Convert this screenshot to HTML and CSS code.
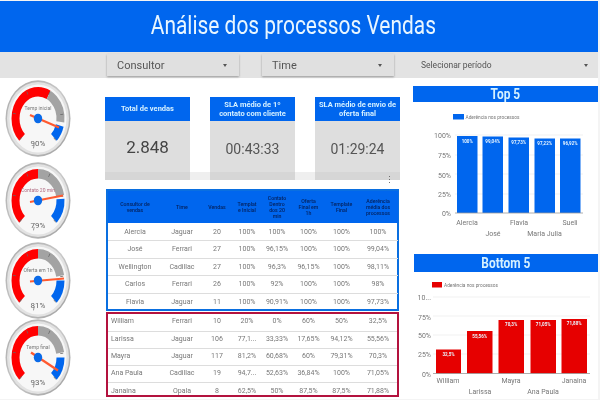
FILE: index.html
```html
<!DOCTYPE html>
<html lang="pt-BR">
<head>
    <meta charset="UTF-8">
    <title>Análise dos processos Vendas</title>
    <link rel="stylesheet" href="styles.css">
</head>
<body>
<div class="page">
    <header class="title"><span class="squeeze">Análise dos processos Vendas</span></header>

    <div class="filters">
        <div class="chip chip-consultor"><span>Consultor</span><i class="caret"></i></div>
        <div class="chip chip-time"><span>Time</span><i class="caret"></i></div>
        <div class="period"><span>Selecionar período</span><i class="caret"></i></div>
    </div>

    <div class="main">
        <div class="gauges">
            <svg class="gauge" viewBox="-38 -38.5 76 77">
                <defs>
                    <linearGradient id="bezel" x1="0" y1="0" x2="1" y2="1">
                        <stop offset="0" stop-color="#a8a8a8"/>
                        <stop offset="0.5" stop-color="#c8c8c8"/>
                        <stop offset="1" stop-color="#9c9c9c"/>
                    </linearGradient>
                    <g id="face">
                        <ellipse class="rim" rx="32.5" ry="38.2"/>
                        <ellipse class="rim-in" rx="31" ry="36.6"/>
                        <ellipse class="dial" rx="28.5" ry="34"/>
                    </g>
                </defs>
                <use href="#face"/>
                <g class="scale">
                    <circle class="arc red" r="22.5" pathLength="360" stroke-dasharray="163 360"/>
                    <circle class="arc gray" r="22.5" pathLength="360" stroke-dasharray="69 360" stroke-dashoffset="-163"/>
                    <circle class="arc blue" r="22.5" pathLength="360" stroke-dasharray="30 360" stroke-dashoffset="-240"/>
                    <circle class="ticks" r="24" pathLength="360" stroke-dasharray="1.5 52.5"/>
                </g>
                <text class="g-label" y="-9">Temp inicial</text>
                <line class="needle" x1="-8" y1="-3.5" x2="21" y2="9"/>
                <ellipse class="hub" rx="4.2" ry="4.8"/>
                <text class="g-value" y="27">90%</text>
            </svg>

            <svg class="gauge gauge-2" viewBox="-38 -38.5 76 77">
                <use href="#face"/>
                <g class="scale">
                    <circle class="arc red" r="22.5" pathLength="360" stroke-dasharray="135 360"/>
                    <circle class="arc gray" r="22.5" pathLength="360" stroke-dasharray="80 360" stroke-dashoffset="-135"/>
                    <circle class="arc blue" r="22.5" pathLength="360" stroke-dasharray="48 360" stroke-dashoffset="-222"/>
                    <circle class="ticks" r="24" pathLength="360" stroke-dasharray="1.5 52.5"/>
                </g>
                <text class="g-label g-label-pink" y="-9">Contato 20 min</text>
                <line class="needle" x1="-8" y1="1.5" x2="25" y2="-5"/>
                <ellipse class="hub" rx="4.2" ry="4.8"/>
                <text class="g-value" y="27">79%</text>
            </svg>

            <svg class="gauge gauge-3" viewBox="-38 -38.5 76 77">
                <use href="#face"/>
                <g class="scale">
                    <circle class="arc red" r="22.5" pathLength="360" stroke-dasharray="135 360"/>
                    <circle class="arc gray" r="22.5" pathLength="360" stroke-dasharray="80 360" stroke-dashoffset="-135"/>
                    <circle class="arc blue" r="22.5" pathLength="360" stroke-dasharray="45 360" stroke-dashoffset="-225"/>
                    <circle class="ticks" r="24" pathLength="360" stroke-dasharray="1.5 52.5"/>
                </g>
                <text class="g-label" y="-9">Oferta em 1h</text>
                <line class="needle" x1="-8" y1="1" x2="26" y2="-2"/>
                <ellipse class="hub" rx="4.2" ry="4.8"/>
                <text class="g-value" y="27">81%</text>
            </svg>

            <svg class="gauge" viewBox="-38 -38.5 76 77">
                <use href="#face"/>
                <g class="scale">
                    <circle class="arc red" r="22.5" pathLength="360" stroke-dasharray="135 360"/>
                    <circle class="arc gray" r="22.5" pathLength="360" stroke-dasharray="80 360" stroke-dashoffset="-135"/>
                    <circle class="arc blue" r="22.5" pathLength="360" stroke-dasharray="45 360" stroke-dashoffset="-225"/>
                    <circle class="ticks" r="24" pathLength="360" stroke-dasharray="1.5 52.5"/>
                </g>
                <text class="g-label" y="-9">Temp final</text>
                <line class="needle" x1="-7" y1="-5" x2="20" y2="13"/>
                <ellipse class="hub" rx="4.2" ry="4.8"/>
                <text class="g-value" y="27">93%</text>
            </svg>
        </div>

        <div class="middle">
            <div class="cards">
                <div class="card">
                    <div class="card-head">Total de vendas</div>
                    <div class="card-value card-value-big">2.848</div>
                </div>
                <div class="card">
                    <div class="card-head">SLA médio de 1º<br>contato com cliente</div>
                    <div class="card-value">00:43:33</div>
                </div>
                <div class="card">
                    <div class="card-head">SLA médio de envio de<br>oferta final</div>
                    <div class="card-value">01:29:24</div>
                </div>
                <span class="more">⋮</span>
            </div>

            <div class="box box-blue">
                <table>
                    <colgroup>
                        <col class="c-name"><col class="c-time"><col class="c-num"><col class="c-num"><col class="c-num"><col class="c-pct"><col class="c-pct"><col class="c-time">
                    </colgroup>
                    <thead>
                        <tr>
                            <th>Consultor de<br>vendas</th>
                            <th>Time</th>
                            <th>Vendas</th>
                            <th>Templat<br>e Inicial</th>
                            <th>Contato<br>Dentro<br>dos 20<br>min</th>
                            <th>Oferta<br>Final em<br>1h</th>
                            <th>Template<br>Final</th>
                            <th>Aderência<br>média dos<br>processos</th>
                        </tr>
                    </thead>
                    <tbody>
                        <tr><td>Alercia</td><td>Jaguar</td><td>20</td><td>100%</td><td>100%</td><td>100%</td><td>100%</td><td>100%</td></tr>
                        <tr><td>José</td><td>Ferrari</td><td>27</td><td>100%</td><td>96,15%</td><td>100%</td><td>100%</td><td>99,04%</td></tr>
                        <tr><td>Wellington</td><td>Cadillac</td><td>27</td><td>100%</td><td>96,3%</td><td>96,15%</td><td>100%</td><td>98,11%</td></tr>
                        <tr><td>Carlos</td><td>Ferrari</td><td>26</td><td>100%</td><td>92%</td><td>100%</td><td>100%</td><td>98%</td></tr>
                        <tr><td>Flavia</td><td>Jaguar</td><td>11</td><td>100%</td><td>90,91%</td><td>100%</td><td>100%</td><td>97,73%</td></tr>
                    </tbody>
                </table>
            </div>

            <div class="box box-red">
                <table>
                    <colgroup>
                        <col class="c-name"><col class="c-time"><col class="c-num"><col class="c-num"><col class="c-num"><col class="c-pct"><col class="c-pct"><col class="c-time">
                    </colgroup>
                    <tbody>
                        <tr><td class="left">William</td><td>Ferrari</td><td>10</td><td>20%</td><td>0%</td><td>60%</td><td>50%</td><td>32,5%</td></tr>
                        <tr><td class="left">Larissa</td><td>Jaguar</td><td>106</td><td>77,1...</td><td>33,33%</td><td>17,65%</td><td>94,12%</td><td>55,56%</td></tr>
                        <tr><td class="left">Mayra</td><td>Jaguar</td><td>117</td><td>81,2%</td><td>60,68%</td><td>60%</td><td>79,31%</td><td>70,3%</td></tr>
                        <tr><td class="left">Ana Paula</td><td>Cadillac</td><td>19</td><td>94,7...</td><td>52,63%</td><td>36,84%</td><td>100%</td><td>71,05%</td></tr>
                        <tr><td class="left">Janaina</td><td>Opala</td><td>8</td><td>62,5%</td><td>50%</td><td>87,5%</td><td>87,5%</td><td>71,88%</td></tr>
                    </tbody>
                </table>
            </div>
        </div>

        <div class="right">
            <h2 class="chart-title"><span class="squeeze">Top 5</span></h2>
            <svg class="chart chart-top" viewBox="413 102 185 150">
                <rect class="blue-fill" x="453" y="114" width="11" height="5.5"/>
                <text class="legend" x="465.5" y="119">Aderência nos processos</text>

                <line class="grid" x1="455" y1="135" x2="583" y2="135"/>
                <line class="grid" x1="455" y1="155" x2="583" y2="155"/>
                <line class="grid" x1="455" y1="174" x2="583" y2="174"/>
                <line class="grid" x1="455" y1="194" x2="583" y2="194"/>

                <text class="tick" x="451" y="138">100%</text>
                <text class="tick" x="451" y="158">75%</text>
                <text class="tick" x="451" y="178">50%</text>
                <text class="tick" x="451" y="197">25%</text>
                <text class="tick" x="451" y="216">0%</text>

                <rect class="blue-fill" x="457" y="136" width="20.5" height="77"/>
                <rect class="blue-fill" x="482.5" y="136.5" width="20.5" height="76.5"/>
                <rect class="blue-fill" x="508.5" y="137.5" width="20.5" height="75.5"/>
                <rect class="blue-fill" x="534.5" y="138.5" width="20.5" height="74.5"/>
                <rect class="blue-fill" x="560" y="138.5" width="20.5" height="74.5"/>
                <line class="axis" x1="455" y1="213" x2="583" y2="213"/>

                <text class="bar-val" x="467.2" y="142.5">100%</text>
                <text class="bar-val" x="492.7" y="142.5">99,04%</text>
                <text class="bar-val" x="518.7" y="143.5">97,73%</text>
                <text class="bar-val" x="544.7" y="144.5">97,22%</text>
                <text class="bar-val" x="570.2" y="144.5">96,92%</text>

                <text class="cat" x="467" y="225">Alercia</text>
                <text class="cat" x="493" y="236">José</text>
                <text class="cat" x="519" y="225">Flavia</text>
                <text class="cat" x="544.5" y="236">Maria Julia</text>
                <text class="cat" x="570" y="225">Sueli</text>
            </svg>

            <h2 class="chart-title chart-title-2"><span class="squeeze">Bottom 5</span></h2>
            <svg class="chart chart-bottom" viewBox="414 272 184 126">
                <rect class="red-fill" x="432" y="282" width="10" height="5.5"/>
                <text class="legend" x="444" y="287">Aderência nos processos</text>

                <line class="grid" x1="433" y1="297" x2="590" y2="297"/>
                <line class="grid" x1="433" y1="316" x2="590" y2="316"/>
                <line class="grid" x1="433" y1="335" x2="590" y2="335"/>
                <line class="grid" x1="433" y1="354" x2="590" y2="354"/>

                <text class="tick" x="431" y="300">10...</text>
                <text class="tick" x="431" y="319.5">75%</text>
                <text class="tick" x="431" y="338">50%</text>
                <text class="tick" x="431" y="357">25%</text>
                <text class="tick" x="431" y="377">0%</text>

                <rect class="red-fill" x="436" y="349.5" width="25" height="24"/>
                <rect class="red-fill" x="467" y="331" width="25.5" height="42.5"/>
                <rect class="red-fill" x="498.5" y="320" width="25.5" height="53.5"/>
                <rect class="red-fill" x="530.5" y="320" width="25.5" height="53.5"/>
                <rect class="red-fill" x="561.5" y="319" width="25.5" height="54.5"/>
                <line class="axis" x1="433" y1="373.5" x2="590" y2="373.5"/>

                <text class="bar-val" x="448.5" y="356">32,5%</text>
                <text class="bar-val" x="479.7" y="337.5">55,56%</text>
                <text class="bar-val" x="511.2" y="325.5">70,3%</text>
                <text class="bar-val" x="543.2" y="325.5">71,05%</text>
                <text class="bar-val" x="574.2" y="325">71,88%</text>

                <text class="cat" x="448" y="383">William</text>
                <text class="cat" x="480" y="394">Larissa</text>
                <text class="cat" x="511" y="383">Mayra</text>
                <text class="cat" x="543" y="394">Ana Paula</text>
                <text class="cat" x="574" y="383">Janaina</text>
            </svg>
        </div>
    </div>
</div>
</body>
</html>
```

FILE: styles.css
```css
html, body {
    padding:0px;
    margin:0px;
    background: #f4f4f4;
    font-family:Roboto, "Liberation Sans", sans-serif;
    overflow:hidden;
}

.page {
    width:598px;
    height:398px;
    margin-top:1px;
    background:white;
    filter:blur(0.4px);
}

.squeeze {
    display:inline-block;
    transform:scaleX(0.85);
}

.title {
    height:51px;
    background:#0066ee;
    color:#e8f6ff;
    font-size:25px;
    line-height:50px;
    text-align:center;
    padding-right:11px;
    box-sizing:border-box;
}

.title .squeeze {
    transform:scaleX(0.837);
}

.filters {
    height:26px;
    background:#e3e3e3;
    display:flex;
    align-items:flex-start;
    padding-left:107px;
    color:#555;
}

.chip {
    width:132px;
    height:22px;
    margin-top:2px;
    background:#e0e0e0;
    box-shadow:0px 1px 2px #999;
    display:flex;
    align-items:center;
    justify-content:space-between;
    padding:0px 12px 0px 10px;
    box-sizing:border-box;
    font-size:11px;
}

.chip-time {
    margin-left:23px;
}

.period {
    flex:1;
    height:26px;
    margin-left:1px;
    display:flex;
    align-items:center;
    justify-content:space-between;
    padding:0px 10px 0px 26px;
    font-size:8.5px;
}

.caret {
    width:0;
    height:0;
    border-left:2px solid transparent;
    border-right:2px solid transparent;
    border-top:3px solid #555;
}

.main {
    display:flex;
    height:321px;
}

.gauges {
    width:105px;
    padding-top:2px;
    box-sizing:border-box;
}

.gauge {
    display:block;
    width:76px;
    height:77px;
}

.gauge-2 {
    margin-top:5px;
}

.gauge-3 {
    margin-top:3px;
}

.rim { fill:url(#bezel); }
.rim-in { fill:#e2e2e2; }
.dial { fill:#f7f7f7; }

.scale {
    transform:scale(1, 1.19) rotate(135deg);
}

.arc {
    fill:none;
    stroke-width:8;
}

.red { stroke:#ff0000; }
.gray { stroke:#a3a3a3; }
.blue { stroke:#0066ee; }

.ticks {
    fill:none;
    stroke:#666;
    stroke-width:3;
}

.needle {
    stroke:#ff5a30;
    stroke-width:2.2;
}

.hub { fill:#0a6ae8; }

.g-label {
    font-size:5px;
    fill:#777;
    text-anchor:middle;
}

.g-label-pink {
    fill:#b06a80;
}

.g-value {
    font-size:8px;
    fill:#666;
    text-anchor:middle;
}

.middle {
    width:295px;
    padding-top:19px;
    box-sizing:border-box;
}

.cards {
    position:relative;
    display:flex;
    justify-content:space-between;
    height:83px;
    background:linear-gradient(to bottom, transparent 75px, #efefef 75px);
}

.card {
    width:85px;
    display:flex;
    flex-direction:column;
    background:linear-gradient(to bottom, #dedede 75px, #d6d6d6 75px);
}

.card-head {
    height:24px;
    background:#0066ee;
    color:#d5f1ff;
    font-size:7.5px;
    font-weight:bold;
    line-height:9.5px;
    text-align:center;
    display:flex;
    align-items:center;
    justify-content:center;
    white-space:nowrap;
}

.card-value {
    flex:1;
    display:flex;
    align-items:center;
    justify-content:center;
    padding-bottom:4px;
    font-size:14px;
    color:#555;
}

.card-value-big {
    font-size:17px;
    color:#444;
    padding-bottom:8px;
}

.more {
    position:absolute;
    right:6px;
    bottom:-5px;
    font-size:9px;
    line-height:10px;
    color:#666;
}

.box {
    box-sizing:border-box;
    margin-left:1px;
    width:293px;
    background:white;
}

.box-blue {
    height:122px;
    margin-top:9px;
    border:2px solid #0a6fe0;
}

.box-red {
    height:85px;
    margin-top:1px;
    border:2px solid #b3123e;
    overflow:hidden;
}

table {
    width:100%;
    table-layout:fixed;
    border-collapse:collapse;
    font-size:7px;
    color:#777;
    text-align:center;
}

.c-name { width:54px; }
.c-time { width:40px; }
.c-num { width:30px; }
.c-pct { width:33px; }

th {
    height:32px;
    padding:0px;
    background:#0066ee;
    color:#04205a;
    font-size:5.2px;
    font-weight:500;
    line-height:6px;
}

td {
    box-sizing:border-box;
    height:17.5px;
    padding:0px;
    border-top:1px solid #ddd;
    white-space:nowrap;
}

.box-red td {
    height:17.2px;
    padding-bottom:2px;
}

tbody tr:first-child td {
    border-top:0px;
}

td.left {
    text-align:left;
    padding-left:3px;
}

.right {
    flex:1;
    margin-left:13px;
    padding-top:8px;
}

h2 {
    margin:0px;
    height:16px;
    background:#0066ee;
    color:#d5f1ff;
    font-size:14px;
    line-height:16px;
    text-align:center;
}

.chart-title-2 {
    height:18px;
    line-height:18px;
    margin-left:1px;
    margin-top:2px;
}

.chart {
    display:block;
}

.chart-top {
    width:185px;
    height:150px;
}

.chart-bottom {
    width:184px;
    height:126px;
    margin-left:1px;
}

.blue-fill { fill:#0066ee; }
.red-fill { fill:#e60000; }

.legend {
    font-size:4.8px;
    fill:#777;
}

.grid {
    stroke:#eeeeee;
    stroke-width:0.8;
}

.axis {
    stroke:#999;
    stroke-width:0.8;
}

.tick {
    font-size:7px;
    fill:#777;
    text-anchor:end;
}

.bar-val {
    font-size:4.5px;
    font-weight:bold;
    fill:#e8f6ff;
    text-anchor:middle;
}

.cat {
    font-size:7px;
    fill:#777;
    text-anchor:middle;
}
```
